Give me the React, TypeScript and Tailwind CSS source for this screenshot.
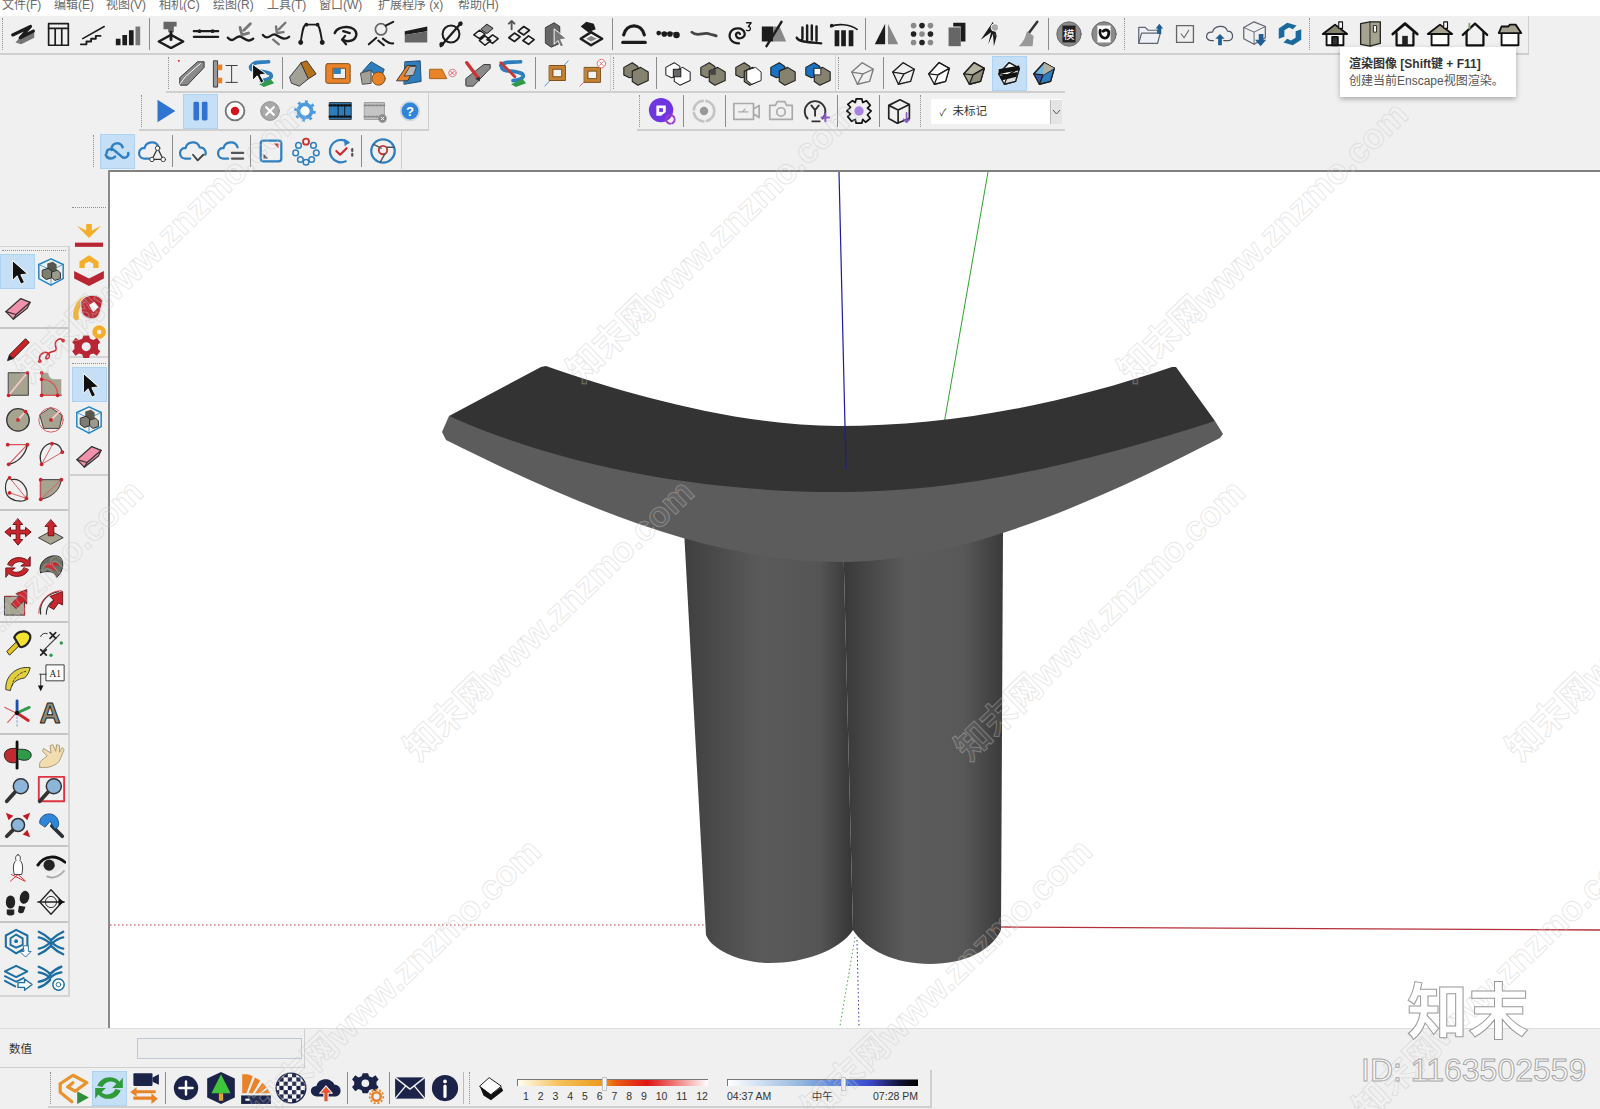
import type { ReactNode } from "react";

const k = "#1c1c1c";
const tan = "#a6a390";
const red = "#c9252d";
const blue = "#2e7dbd";
const navy = "#1b2348";
const org = "#e8832a";

const S = ({ children, size = 30 }: { children: ReactNode; size?: number }) => (
  <svg width={size} height={size} viewBox="0 0 32 32" fill="none" strokeLinecap="round" strokeLinejoin="round">
    {children}
  </svg>
);

const B = ({ on, children }: { on?: boolean; children: ReactNode }) => (
  <div className={`flex h-[35px] w-[35px] shrink-0 items-center justify-center ${on ? "bg-[#c4dff6] outline outline-[#aed3f2] -outline-offset-1" : ""}`}>
    {children}
  </div>
);

const Sep = ({ w = "w-[7px]" }: { w?: string }) => (
  <div className={`flex h-[32px] shrink-0 justify-center ${w}`}>
    <div className="w-[1px] bg-[#8c8c8c]" />
  </div>
);

const Grip = ({ w = "w-[8px]" }: { w?: string }) => (
  <div className={`h-[32px] shrink-0 pl-[2px] ${w}`}>
    <div className="h-full w-[1px] border-l border-dotted border-[#8f8f8f]" />
  </div>
);

const HGrip = () => <div className="mx-[2px] mb-[3px] h-[1px] border-t border-dotted border-[#8f8f8f]" />;
const HSep = ({ h }: { h: string }) => (
  <div className={`col-span-2 flex items-center ${h}`}>
    <div className="h-[2px] w-full bg-[#c6c6c6]" />
  </div>
);

/* ---------- drawn icons ---------- */
const Cube = ({ f = tan, s = k, t = "#c9c7b6", d = "#7f7d6c" }: { f?: string; s?: string; t?: string; d?: string }) => (
  <g stroke={s} strokeWidth="1.4">
    <path d="M16 5 27 11 23 25 11 28 5 17Z" fill={f} />
    <path d="M16 5 5 17 15 18 27 11Z" fill={t} />
    <path d="M15 18 11 28 23 25 27 11Z" fill={d} />
  </g>
);
const WireCube = () => (
  <g stroke={k} strokeWidth="1.4">
    <path d="M15 5 27 12 23 25 10 28 4 15Z" />
    <path d="M4 15 16 17 27 12M16 17 10 28" />
  </g>
);
const Stack = ({ a = "#85826f", b = "#85826f" }: { a?: string; b?: string }) => (
  <g stroke="#222" strokeWidth="1.2">
    <path d="M3 10 12 5 18 9 18 19 9 21 3 18Z" fill={a} />
    <path d="M12 14 21 10 29 15 29 24 18 29 12 25Z" fill={b} />
  </g>
);
const House = ({ roof = tan, door, chim }: { roof?: string; door?: boolean; chim?: boolean }) => (
  <g stroke="#111" strokeWidth="2">
    <path d="M7 15V28H25V15" fill="#fff" />
    <path d="M3 16 16 6 29 16Z" fill={roof} />
    {door && <rect x="13" y="19" width="6" height="9" fill="#333" />}
    {chim && <rect x="20" y="3" width="4" height="7" fill="#fff" strokeWidth="1.2" />}
  </g>
);
const Arrow = () => <path d="M25 3 14 7 17 10 9 18 14 23 22 15 25 18Z" fill={red} stroke="#7d1015" />;
const Lens = ({ x = 19, y = 12, r = 8 }: { x?: number; y?: number; r?: number }) => (
  <g>
    <path d={`M${x - r * 0.7} ${y + r * 0.7} 4 28`} stroke="#333" strokeWidth="4" />
    <circle cx={x} cy={y} r={r} fill="#8db4d9" stroke="#333" strokeWidth="1.6" />
  </g>
);
const Pointer = () => <path d="M10 4V25L15 20 19 29 23 27 19 19 26 18Z" fill="#111" stroke="#fff" strokeWidth="1" />;
const Eraser = () => (
  <g stroke="#333" strokeWidth="1.3">
    <path d="M3 21 19 7 29 11 26 17 11 29Z" fill="#f191ab" />
    <path d="M3 21 14 24 29 11" />
    <path d="M14 24 11 29" />
  </g>
);
const BoxGroup = () => (
  <g>
    <path d="M16 2 29 8V23L16 30 3 23V8Z" stroke="#1f86c6" strokeWidth="1.6" />
    <path d="M3 8 16 14 29 8M16 14V30" stroke="#1f86c6" strokeWidth=".8" />
    <path d="M12 7 18 5 22 8 22 14 16 16 12 13Z" fill="#57574f" />
    <path d="M7 14 13 12 17 15 17 22 11 24 7 21Z" fill="#7d7d72" stroke="#222" />
    <path d="M17 16 23 14 26 17 26 23 20 25 17 22Z" fill="#9a9a8e" stroke="#222" />
  </g>
);
const RedDots = ({ d }: { d: [number, number][] }) => (
  <>
    {d.map(([x, y], i) => (
      <circle key={i} cx={x} cy={y} r="2" fill={red} />
    ))}
  </>
);
const CloudPath = "M9 23H6C-1 22 1 13 8 14 10 6 22 6 24 13 31 13 31 23 25 23H20";

export default function App() {
  return (
    <div className="relative h-[1109px] w-[1600px] overflow-hidden bg-[#f0f0f0] font-['Liberation_Sans','Noto_Sans_CJK_SC',sans-serif] text-[#333]">
      {/* top area */}
      <header className="h-[170px]">
        <div className="flex h-[16px] items-start overflow-hidden bg-white text-[12px] leading-[12px] text-[#6a6a6a]">
          <div className="-mt-[1px] flex pl-[2px]">
            <span className="w-[52px]">文件(F)</span>
            <span className="w-[52px]">编辑(E)</span>
            <span className="w-[53px]">视图(V)</span>
            <span className="w-[54px]">相机(C)</span>
            <span className="w-[54px]">绘图(R)</span>
            <span className="w-[52px]">工具(T)</span>
            <span className="w-[59px]">窗口(W)</span>
            <span className="w-[80px]">扩展程序 (x)</span>
            <span>帮助(H)</span>
          </div>
        </div>

        {/* row 1 */}
        <div className="flex h-[39px] w-[1529px] items-center border-b-2 border-r border-[#cfcfcf] pb-[1px]">
          <Grip w="w-[5.5px]" />
          <B><S><path d="M14 27 28 20V11L14 18 8 25Z" fill="#777" /><path d="M5 17 24 8 13 20 27 13" stroke={k} strokeWidth="3.4" /></S></B>
          <B><S><rect x="6" y="5" width="21" height="23" stroke={k} strokeWidth="1.8" /><path d="M6 10H27M13 10V28M20 10V28" stroke={k} strokeWidth="1.8" /></S></B>
          <B><S><path d="M3 27H9V24H14V21H19V18H24" stroke={k} strokeWidth="2" /><path d="M5 21 28 8" stroke={k} strokeWidth="1.6" /></S></B>
          <B><S><path d="M3 21H8V28H3ZM10 17H15V28H10ZM17 12H22V28H17Z" fill={k} /><path d="M24 8H29V28H24Z" fill="#777" /></S></B>
          <Sep w="w-[8px]" />
          <B><S><path d="M3 24 16 17 29 24 16 31Z" stroke={k} strokeWidth="2.6" /><path d="M8 3H22V8H19V14H13V11H8Z" fill="#666" /><path d="M16 14V22" stroke={k} strokeWidth="3" /></S></B>
          <B><S><path d="M3 13H29M3 19H29" stroke={k} strokeWidth="2.4" /><circle cx="9" cy="13" r="2" fill={k} /><circle cx="23" cy="13" r="2" fill={k} /></S></B>
          <B><S><path d="M2 20C8 27 11 16 16 19S25 25 29 21" stroke={k} strokeWidth="2.6" /><path d="M26 5 19 12M15 9 17 17 24 15" stroke="#777" strokeWidth="3" /></S></B>
          <B><S><path d="M2 17C8 24 11 14 16 17S25 23 30 19" stroke={k} strokeWidth="2.4" /><path d="M26 4 19 11M16 8 17 15 24 14M13 22 19 27" stroke="#777" strokeWidth="2.6" /></S></B>
          <B><S><path d="M5 25C7 11 8 6 11 6H22C25 6 26 13 28 25" stroke={k} strokeWidth="2" /><circle cx="5" cy="25" r="2.6" fill={k} /><circle cx="28" cy="25" r="2.6" fill={k} /><circle cx="11" cy="6" r="2" fill={k} /><circle cx="23" cy="6" r="2" fill={k} /></S></B>
          <B><S><path d="M4 15C7 6 28 6 27 17 26 24 17 25 12 22" stroke={k} strokeWidth="2.6" /><path d="M13 13 20 15M15 18 12 22 16 27" stroke={k} strokeWidth="2.4" /></S></B>
          <B><S><circle cx="16" cy="11" r="6" stroke="#666" strokeWidth="1.8" /><path d="M21 7 29 3M3 27 11 20M18 21C22 24 25 27 29 26M13 23 19 28" stroke={k} strokeWidth="2.2" /></S></B>
          <B><S><path d="M4 13 28 8V13L4 17Z" fill={k} /><path d="M4 17 28 13V25H4Z" fill="#666" /></S></B>
          <B><S><circle cx="16" cy="16" r="9" stroke={k} strokeWidth="2.2" /><path d="M5 29 27 4" stroke={k} strokeWidth="2.4" /><circle cx="6" cy="27" r="2.4" fill={k} /><circle cx="26" cy="5" r="2.4" fill={k} /></S></B>
          <B><S><path d="M3 17 9 12 15 16 9 21ZM11 11 17 6 23 10 17 15ZM17 22 23 17 29 21 23 26ZM9 23 15 18 21 23 15 28Z" stroke={k} strokeWidth="1.6" /><path d="M11 11 17 6 23 10 17 15Z" fill="#888" /></S></B>
          <B><S><path d="M3 20 9 15 15 19 9 24ZM13 13 19 8 25 12 19 17ZM18 23 24 18 30 22 24 27Z" stroke={k} strokeWidth="1.8" /><path d="M6 2V11M3 5 6 2 9 5" stroke="#555" strokeWidth="2" /></S></B>
          <B><S><path d="M5 9 14 4 20 8V26L11 30 5 26Z" fill="#666" stroke="#333" /><path d="M14 11V27L18 23 21 30 24 28 21 22 27 21Z" fill="#777" stroke="#fff" /></S></B>
          <B><S><path d="M5 8 11 3 19 5 21 11 13 14Z" fill={k} /><path d="M5 21 16 14 28 21 16 28Z" stroke={k} strokeWidth="2.6" /><path d="M11 21 16 18 22 21 16 24Z" fill="#888" /></S></B>
          <Sep w="w-[8px]" />
          <B><S><path d="M5 17C8 4 24 4 27 17" stroke={k} strokeWidth="3.4" /><path d="M4 25H28" stroke={k} strokeWidth="3.4" /></S></B>
          <B><S><circle cx="5" cy="15" r="2.5" fill={k} /><circle cx="11" cy="16" r="3" fill={k} /><circle cx="17" cy="16" r="3" fill={k} /><circle cx="24" cy="17" r="3.5" fill={k} /><path d="M5 15H24" stroke={k} /></S></B>
          <B><S><path d="M3 14C9 20 16 13 22 16 25 17 27 17 29 18" stroke="#444" strokeWidth="3" /></S></B>
          <B><S><path d="M16 26C8 26 4 20 7 14 10 9 20 8 22 15 23 20 15 23 13 18 12 15 16 13 17 16" stroke={k} strokeWidth="2.4" /><path d="M24 4H29L26 8C30 9 28 14 24 12" stroke={k} strokeWidth="1.4" /></S></B>
          <B><S><path d="M3 8H15V24H3Z" fill={k} /><path d="M15 8H22L29 24H15Z" fill="#888" /><path d="M8 29 24 3" stroke={k} strokeWidth="2.6" /></S></B>
          <B><S><path d="M3 20C5 25 20 25 29 26M9 9V21M14 7V22M19 7V22M24 8V23" stroke={k} strokeWidth="2.6" /></S></B>
          <B><S><path d="M2 8C8 5 22 5 30 11" stroke={k} strokeWidth="1.8" /><circle cx="3" cy="7" r="2" fill={k} /><path d="M6 12H11V29H6ZM13 12H18V29H13ZM21 12H26V29H21Z" fill={k} /></S></B>
          <Sep w="w-[8px]" />
          <B><S><path d="M14 5V27H3Z" fill={k} /><path d="M17 5V27H28Z" fill="#888" /></S></B>
          <B><S>{[7, 16, 25].map((x) => [7, 16, 25].map((y) => <circle key={`${x}${y}`} cx={x} cy={y} r="3" fill={(x + y) % 2 ? "#222" : "#8a8a8a"} />))}</S></B>
          <B><S><path d="M12 4H25V24H20V8H12Z" fill={k} /><path d="M7 9H20V29H7Z" fill="#666" /></S></B>
          <B><S><path d="M17 3 21 18 17 16 12 27 15 14 4 22Z" fill={k} /><path d="M17 16 18 29 21 18Z" fill={k} /><circle cx="19" cy="9" r="4" fill="#aaa" stroke="#fff" /></S></B>
          <B><S><path d="M27 3 18 15" stroke="#333" strokeWidth="2.6" /><path d="M16 13 23 18 22 29H7C12 25 14 20 16 13Z" fill="#999" /></S></B>
          <Sep />
          <B><S><circle cx="16" cy="16" r="13" fill="#8a8a8a" stroke="#666" /><rect x="9" y="7" width="14" height="18" fill="#222" /><text x="16" y="21" fontSize="12" fill="#fff" textAnchor="middle">模</text></S></B>
          <B><S><circle cx="16" cy="16" r="13" fill="#8a8a8a" stroke="#666" /><rect x="9" y="7" width="14" height="18" fill="#fff" /><path d="M12 12C10 20 20 24 21 16 22 11 17 11 15 13" stroke="#111" strokeWidth="3" /></S></B>
          <Grip w="w-[10.5px]" />
          <B><S><path d="M4 26V9H11L14 12H24V26Z" fill="#eef0f7" stroke="#5f6472" strokeWidth="1.3" /><path d="M4 26 7 15H27L24 26Z" fill="#eef0f7" stroke="#5f6472" strokeWidth="1.3" /><path d="M26 5 30 10H28V16H24V10H22Z" fill="#1f5f94" /></S></B>
          <B><S><rect x="7" y="7" width="18" height="18" stroke="#666" strokeWidth="1.4" /><path d="M12 16 15 20 20 12" stroke="#666" strokeWidth="1.2" /></S></B>
          <B><S><path d={CloudPath} stroke="#4e5463" strokeWidth="1.3" /><path d="M16 16 21 21H18V28H14V21H11Z" fill="#1f5f94" /></S></B>
          <B><S><path d="M15 3 27 8V20L15 27 4 21V9Z" stroke="#5f6472" strokeWidth="1.3" /><path d="M4 9 15 14 27 8M15 14V27" stroke="#5f6472" /><path d="M20 16H25V22H28L22 29 16 22H20Z" fill="#1f5f94" /></S></B>
          <B><S><path d="M13 4 23 7 19 11 15 9 10 12V19L4 21V10ZM19 28 9 25 13 21 17 23 22 20V13L28 11V22Z" fill="#1c6a9c" /></S></B>
          <Grip w="w-[10.5px]" />
          <B><S><House door chim roof="#86836f" /></S></B>
          <B><S><path d="M6 5 16 3H27V26L16 29 6 27Z" fill={tan} stroke="#222" strokeWidth="1.4" /><path d="M16 3V29" stroke="#222" /><rect x="20" y="7" width="3" height="7" fill="#fff" stroke="#222" /></S></B>
          <B><S><path d="M3 16 16 5 29 16" stroke="#111" strokeWidth="3" /><path d="M7 15V28H25V15" stroke="#111" strokeWidth="2.4" /><rect x="13" y="18" width="6" height="10" fill="#222" /></S></B>
          <B><S><House chim /></S></B>
          <B><S><path d="M3 17 16 5 29 17" stroke="#111" strokeWidth="2.4" /><path d="M7 14V28H25V14" stroke="#111" strokeWidth="2.4" /><path d="M10 5V10" stroke="#8a6" strokeWidth="2" /></S></B>
          <B><S><path d="M7 15H25V28H7Z" fill="#fff" stroke="#111" strokeWidth="2" /><path d="M4 15 7 8H14L16 6H22L28 15Z" fill={tan} stroke="#111" strokeWidth="2" /></S></B>
        </div>

        {/* row 2 */}
        <div className="ml-[166px] flex h-[38px] w-[899px] items-center border-b-2 border-[#cfcfcf]">
          <Grip w="w-[7.5px]" />
          <B><S><path d="M4 28V21L23 4H30V10L12 29H5Z" fill="#8a8a8a" stroke="#333" /><path d="M4 28 10 20 26 6" stroke="#fff" /><circle cx="3" cy="3" r="1" fill="#d00" /></S></B>
          <B><S><rect x="3" y="3" width="4" height="28" fill="#999" stroke="#333" /><rect x="7" y="7" width="5" height="6" fill={org} /><rect x="7" y="21" width="5" height="6" fill={org} /><path d="M16 8H28M22 8V26M16 26H28" stroke="#333" /></S></B>
          <B><S><path d="M6 8C9 3 16 5 24 4M5 9C4 16 18 12 26 17 30 22 20 24 16 24" stroke={blue} strokeWidth="4" /><path d="M14 28 26 22 30 27 19 31Z" fill="#2f9a4a" /><path d="M7 7V24L12 19 16 27 19 25 15 18 21 17Z" fill="#111" stroke="#fff" /></S></B>
          <Sep />
          <B><S><path d="M2 20 14 5 22 22 12 30 4 27Z" fill="#a3a097" stroke="#333" /><path d="M14 5 20 3 30 17 22 22Z" fill="#b5711c" stroke="#333" /></S></B>
          <B><S><rect x="3" y="6" width="26" height="21" rx="2" fill={org} stroke="#7a4a12" /><rect x="11" y="11" width="13" height="11" fill="#eee" stroke="#7a4a12" /><rect x="11" y="11" width="8" height="6" fill={blue} /></S></B>
          <B><S><path d="M5 14 14 4 28 12 24 23 14 14Z" fill={blue} stroke="#23517a" /><path d="M3 16 14 13 14 27 5 28Z" fill="#a3a097" stroke="#444" /><ellipse cx="22" cy="22" rx="7" ry="7" fill={org} stroke="#7a4a12" /></S></B>
          <B><S><path d="M13 4 29 3 30 25 12 28Z" fill={blue} stroke="#1f4a70" /><path d="M4 24 15 8H24L16 24Z" fill={org} stroke="#333" /><path d="M12 19 18 9H25L22 18Z" fill="#b9b9b9" stroke="#444" /></S></B>
          <B><S><path d="M2 12H15L20 22H2Z" fill={org} stroke="#a55e12" /><circle cx="26" cy="16" r="4" stroke="#d78" /><path d="M24 14 28 18M28 14 24 18" stroke="#d55" /></S></B>
          <B><S><path d="M3 29V22L22 7H29V11L11 30H4Z" fill="#8a8a8a" stroke="#333" /><path d="M4 5 16 21" stroke="#c33" strokeWidth="3.6" /><path d="M13 22 18 20 18 25Z" fill="#333" /></S></B>
          <B><S><path d="M3 8C7 3 14 5 24 4M4 9C3 16 18 12 26 17 30 22 20 24 16 24" stroke={blue} strokeWidth="4" /><path d="M14 28 26 22 30 27 19 31Z" fill="#2f9a4a" /><path d="M3 5 18 20" stroke="#c33" strokeWidth="3" /></S></B>
          <Sep w="w-[9px]" />
          <B><S><path d="M28 3 3 30" stroke="#4f8fd4" /><rect x="8" y="8" width="17" height="16" fill="#c58234" stroke="#7a4a12" /><rect x="12" y="12" width="9" height="8" fill="#f3f3f3" stroke="#7a4a12" /></S></B>
          <B><S><path d="M26 8 3 30" stroke="#e46a6a" /><rect x="8" y="10" width="17" height="16" fill="#c58234" stroke="#7a4a12" /><rect x="12" y="14" width="9" height="8" fill="#f3f3f3" stroke="#7a4a12" /><circle cx="26" cy="6" r="4.5" fill="#fff" stroke="#e46a6a" /><path d="M24 4 28 8M28 4 24 8" stroke="#e46a6a" /></S></B>
          <div className="h-[36px] w-[1px] shrink-0 bg-[#d4d4d4]" />
          <Grip w="w-[7.5px]" />
          <B><S><Stack /></S></B>
          <Sep />
          <B><S><g strokeWidth="1.1" stroke="#222"><path d="M3 10 12 5 18 9 18 19 9 21 3 18Z" fill="#fff" /><path d="M12 14 21 10 29 15 29 24 18 29 12 25Z" fill="#fff" /><rect x="11" y="12" width="8" height="8" fill="#666" /></g></S></B>
          <B><S><Stack /><rect x="13" y="12" width="6" height="6" fill="#444" /></S></B>
          <B><S><Stack /><path d="M15 13 24 10 30 15 30 24 20 28 15 24Z" fill="#fff" stroke="#222" /></S></B>
          <B><S><Stack a="#1a72c4" /></S></B>
          <B><S><Stack a="#1a72c4" /><rect x="12" y="11" width="7" height="7" fill="#fff" stroke="#222" /></S></B>
          <div className="h-[36px] w-[1px] shrink-0 bg-[#d4d4d4]" />
          <Grip w="w-[9.5px]" />
          <B><S><g opacity=".55"><WireCube /></g></S></B>
          <Sep w="w-[6px]" />
          <B><S><WireCube /></S></B>
          <B><S><Cube f="#fff" t="#fff" d="#fff" /></S></B>
          <B><S><Cube f="#a8a58f" t="#b5b39f" d="#8f8d7a" /></S></B>
          <B on><S><Cube f="#fff" t="#fff" d="#ddd" /><path d="M5 12 27 8 27 13 5 17ZM6 19 25 15 24 20 8 24Z" fill="#111" /></S></B>
          <B><S><Cube f="#35a" t="#6fb5dd" d="#2b7fc0" /><path d="M27 11 15 18 16 5Z" fill="#b5b39f" /></S></B>
        </div>

        {/* row 3 */}
        <div className="flex h-[38px]">
          <div className="ml-[139px] flex h-[38px] w-[290px] items-center border-b-2 border-r border-[#cfcfcf]">
            <Grip w="w-[8.5px]" />
            <B><S><path d="M8 4 27 16 8 28Z" fill="#2f74d0" /></S></B>
            <B on><S><rect x="9" y="6" width="6" height="20" rx="1.5" fill="#2f74d0" /><rect x="18" y="6" width="6" height="20" rx="1.5" fill="#2f74d0" /></S></B>
            <B><S><circle cx="16" cy="16" r="10" fill="#fff" stroke="#777" strokeWidth="2" /><circle cx="16" cy="16" r="4.5" fill="#d3151b" /></S></B>
            <B><S><circle cx="16" cy="16" r="10" fill="#a8a8a8" stroke="#8d8d8d" /><path d="M12 12 20 20M20 12 12 20" stroke="#fff" strokeWidth="2.4" /></S></B>
            <B><S><circle cx="16" cy="16" r="7" fill="#fff" stroke="#4b9be0" strokeWidth="4" /><circle cx="16" cy="16" r="10" stroke="#4b9be0" strokeWidth="3" strokeDasharray="3 4.8" strokeLinecap="butt" /></S></B>
            <B><S><rect x="5" y="7" width="23" height="18" fill="#2c7db9" stroke="#333" /><path d="M5 10H28M5 22H28" stroke="#111" strokeWidth="2.4" strokeDasharray="2 2" /><path d="M14 10V22M21 10V22" stroke="#111" /></S></B>
            <B><S><rect x="5" y="7" width="21" height="18" fill="#c4c4c4" stroke="#999" /><path d="M5 10H26M5 22H26" stroke="#888" strokeWidth="2" strokeDasharray="2 2" /><circle cx="24" cy="24" r="4.5" fill="#888" /><path d="M22.5 22.5 25.5 25.5M25.5 22.5 22.5 25.5" stroke="#fff" /></S></B>
            <B><S><circle cx="16" cy="16" r="10" fill="#2f85d8" stroke="#cfd8e0" strokeWidth="2" /><text x="16" y="21" fontSize="14" fontWeight="700" fill="#fff" textAnchor="middle">?</text></S></B>
          </div>
          <div className="ml-[208px] flex h-[38px] w-[428px] items-center border-b-2 border-[#cfcfcf]">
            <Grip w="w-[7.5px]" />
            <B><S><circle cx="15" cy="15" r="13" fill="#6f36e0" /><path d="M10 10H20V17L15 21H10Z" fill="#fff" /><rect x="13" y="13" width="4" height="4" fill="#6f36e0" /><circle cx="25" cy="25" r="4.5" stroke="#a03ad0" strokeWidth="2" strokeDasharray="5 2" /></S></B>
            <Sep />
            <B><S><circle cx="16" cy="16" r="4.5" fill="#999" /><circle cx="16" cy="16" r="11" stroke="#c4c4c4" strokeWidth="3" strokeDasharray="14 4" /></S></B>
            <Sep />
            <B><S><path d="M3 8H24V25H3ZM24 14 30 10V23L24 19" stroke="#aaa" strokeWidth="1.8" /><path d="M8 17H18M15 14 12 17" stroke="#aaa" strokeWidth="1.4" /></S></B>
            <B><S><path d="M4 10H10L12 6H20L22 10H28V25H4Z" stroke="#aaa" strokeWidth="1.8" /><circle cx="16" cy="17" r="4.5" stroke="#aaa" strokeWidth="1.8" /></S></B>
            <B><S><path d="M7 24A11 11 0 1 1 23 24" stroke="#333" strokeWidth="2" /><path d="M11 10 15 15 19 10M15 15V21" stroke="#333" strokeWidth="2" /><path d="M12 27H20" stroke="#333" strokeWidth="2" /><path d="M26 19V27M22 23H30" stroke="#8a5cc9" strokeWidth="2.2" /></S></B>
            <Sep w="w-[8px]" />
            <B><S><path d="M13 3H19L20 7 24 5 28 10 25 13 29 16 25 20 28 24 23 28 20 25 19 29H13L12 25 8 27 4 22 7 19 3 16 7 12 4 9 9 5 12 7Z" stroke="#111" strokeWidth="1.8" /><circle cx="16" cy="16" r="5" fill="#a983e0" /></S></B>
            <Sep w="w-[6px]" />
            <B><S><path d="M4 10 16 4 26 9V24L13 29 4 24ZM4 10 14 15V29M14 15 26 9" stroke="#222" strokeWidth="1.8" /><path d="M23 18V28M20 25 23 28 26 25" stroke="#8a5cc9" strokeWidth="1.8" /></S></B>
            <Grip w="w-[13px]" />
            <div className="mt-[1px] flex h-[25px] w-[131px] items-center bg-white pl-[9px] pt-[1px] text-[11.5px]">
              <span className="w-[13px] text-[10px]">✓</span>
              <span className="flex-1">未标记</span>
              <div className="flex h-full w-[12px] items-center justify-center border-l border-[#bbb] bg-[#e4e4e4]">
                <svg width="9" height="6" viewBox="0 0 9 6"><path d="M1 1 4.5 5 8 1" fill="none" stroke="#555" /></svg>
              </div>
            </div>
          </div>
        </div>

        {/* row 4 */}
        <div className="ml-[91px] flex h-[38px] w-[311px] items-center border-r border-[#cfcfcf] pt-[2px]">
          <Grip w="w-[8.5px]" />
          <B on><S><path d="M5 18C5 13 11 13 14 16L21 22C24 25 29 22 28 18M10 15C10 6 20 6 22 12M4 20C6 26 12 24 14 22" stroke="#2f7fc1" strokeWidth="2.6" /></S></B>
          <B><S><path d="M13 24H7C0 23 1 12 8 13 10 5 21 5 23 12" stroke="#2f7fc1" strokeWidth="2.4" /><path d="M22 13 16 25H28Z" stroke="#333" strokeWidth="1.4" /><circle cx="22" cy="13" r="2.4" fill="#fff" stroke="#333" /><circle cx="16" cy="25" r="2.4" fill="#fff" stroke="#333" /><circle cx="28" cy="25" r="2.4" fill="#fff" stroke="#333" /></S></B>
          <Sep w="w-[6px]" />
          <B><S><path d="M13 24H7C0 23 1 12 8 13 10 5 21 5 23 12 30 12 30 19 29 20" stroke="#2f7fc1" strokeWidth="2.4" /><path d="M16 20 21 26 27 20" stroke="#444" strokeWidth="2" /></S></B>
          <div className="w-[2.5px] shrink-0" />
          <B><S><path d="M13 24H7C0 23 1 12 8 13 10 5 21 5 23 12" stroke="#2f7fc1" strokeWidth="2.4" /><path d="M17 18H29M17 24H29" stroke="#555" strokeWidth="2.4" /></S></B>
          <Sep w="w-[5px]" />
          <B><S><rect x="5" y="5" width="22" height="22" rx="3" stroke="#2f7fc1" strokeWidth="2.4" /><path d="M19 8H24V13Z" fill="#c9352d" /><path d="M13 24H8V19Z" fill="#555" /></S></B>
          <B><S><circle cx="16" cy="6" r="3.2" stroke="#c9352d" strokeWidth="2" />{[[8, 10], [24, 10], [5, 18], [27, 18], [10, 25], [22, 25], [16, 28]].map(([x, y]) => <circle key={`${x}${y}`} cx={x} cy={y} r="3" stroke="#2f7fc1" strokeWidth="1.6" />)}</S></B>
          <B><S><path d="M24 7A12 12 0 1 0 21 27" stroke="#2f7fc1" strokeWidth="2.4" /><path d="M19 3 25 7 20 11Z" fill="#2f7fc1" /><path d="M11 16 15 20 22 13" stroke="#d3252a" strokeWidth="2.2" /><path d="M28 14V24" stroke="#555" strokeWidth="2.4" strokeDasharray="2 3" /></S></B>
          <Sep w="w-[7.5px]" />
          <B><S><circle cx="16" cy="16" r="12.5" stroke="#2f7fc1" strokeWidth="2.4" /><circle cx="16" cy="15" r="4.5" stroke="#c9352d" strokeWidth="2" /><path d="M6 9 14 13M20 12H28M18 19 13 28" stroke="#555" strokeWidth="1.6" /></S></B>
        </div>
      </header>

      {/* middle */}
      <div className="flex h-[858px]">
        <aside className="flex h-full w-[110px] shrink-0 border-r-2 border-[#8a8a8a]">
          <div className="w-[70px] shrink-0 pt-[76px]">
            <div className="border-b-2 border-r-2 border-t border-[#d4d4d4] pt-[3px]">
              <HGrip />
              <div className="grid grid-cols-[33px_35px]">
                <B on><S><Pointer /></S></B>
                <B><S><BoxGroup /></S></B>
                <B><S><Eraser /></S></B>
                <div />
                <HSep h="h-[7px]" />
                <B><S><path d="M5 28 7 22 24 5 28 9 11 26Z" fill="#c22" stroke="#222" /><path d="M5 28 7 22 11 26Z" fill="#222" /></S></B>
                <B><S><path d="M4 29C2 20 12 17 14 22S8 28 11 24C14 15 24 22 21 13 19 7 26 3 29 7" stroke="#c9252d" strokeWidth="1.6" /><RedDots d={[[4, 29], [29, 7]]} /></S></B>
                <B><S><rect x="6" y="4" width="21" height="24" fill={tan} stroke="#333" /><path d="M6 28 26 4" stroke="#f6c9c9" strokeWidth="2" /><RedDots d={[[6, 28], [26, 4]]} /></S></B>
                <B><S><path d="M6 4V28H27V11H20A7 7 0 0 1 13 4Z" fill={tan} /><path d="M6 4V28H27M6 11C16 11 23 18 23 28" stroke="#d8555a" strokeWidth="1.4" /><RedDots d={[[6, 4], [6, 11], [23, 28], [6, 28]]} /></S></B>
                <B><S><circle cx="16" cy="17" r="12" fill={tan} stroke="#333" strokeWidth="1.4" /><path d="M16 17 24 8" stroke="#f6c9c9" strokeWidth="2" /><RedDots d={[[16, 17], [24, 8]]} /></S></B>
                <B><S><path d="M16 4 28 12 25 26H8L4 12Z" fill={tan} stroke="#333" /><circle cx="16" cy="17" r="13" stroke="#d8555a" /><path d="M16 17 25 8" stroke="#f6c9c9" strokeWidth="2" /><RedDots d={[[16, 17]]} /></S></B>
                <B><S><path d="M5 6H26L6 27" stroke="#d8555a" strokeWidth="1.2" /><path d="M6 27C16 25 24 17 26 6" stroke="#333" strokeWidth="1.4" /><RedDots d={[[5, 6], [26, 6], [6, 27]]} /></S></B>
                <B><S><path d="M6 27 28 14" stroke="#d8555a" /><path d="M6 27 C 1 14 10 3 20 5 25 6 27 10 28 14" stroke="#333" strokeWidth="1.4" /><path d="M6 27 18 5" stroke="#d8555a" /><RedDots d={[[6, 27], [28, 14], [17, 5]]} /></S></B>
                <B><S><path d="M7 4 25 26" stroke="#d8555a" /><path d="M7 4C1 8 1 22 8 26 14 30 24 30 25 26M9 6C20 4 28 16 25 26" stroke="#333" strokeWidth="1.3" /><path d="M7 20 25 26" stroke="#d8555a" /><RedDots d={[[7, 4], [25, 26], [7, 20]]} /></S></B>
                <B><S><path d="M5 6H27C26 16 18 25 5 27Z" fill={tan} stroke="#333" /><path d="M5 6V27L27 6" stroke="#d8555a" /><RedDots d={[[5, 6], [5, 27], [27, 6]]} /></S></B>
                <HSep h="h-[8px]" />
                <B><S><path d="M16 2 21 8H18V14H24V11L30 16 24 21V18H18V24H21L16 30 11 24H14V18H8V21L2 16 8 11V14H14V8H11Z" fill={red} stroke="#6c0f14" /></S></B>
                <B><S><path d="M3 22 16 15 29 22 16 29Z" fill={tan} stroke="#333" /><path d="M16 3 22 10H19V20H13V10H10Z" fill={red} stroke="#6c0f14" /></S></B>
                <B><S><path d="M5 13C8 5 20 4 26 9L29 5V15H19L23 12C19 9 12 10 10 15ZM27 19C24 27 12 28 6 23L3 27V17H13L9 20C13 23 20 22 22 17Z" fill={red} stroke="#6c0f14" /></S></B>
                <B><S><path d="M5 22C1 11 14 1 25 5 31 9 29 22 22 27 20 20 12 20 5 22Z" fill="#6b6b5f" stroke="#222" /><path d="M9 16C15 9 22 10 25 15L18 14 22 21 14 17Z" fill={red} /></S></B>
                <B><S><rect x="2" y="10" width="21" height="20" fill={tan} stroke="#333" /><path d="M2 10H12M23 20V30" stroke={red} /><Arrow /></S></B>
                <B><S><path d="M5 29C3 16 12 7 24 5M11 29C11 21 16 14 24 12" stroke="#333" strokeWidth="1.2" /><path d="M3 28A24 24 0 0 1 27 4" stroke={red} /><path d="M28 5 15 10 19 14 14 21 19 24 24 17 28 19Z" fill={red} stroke="#6c0f14" /></S></B>
                <HSep h="h-[6px]" />
                <B><S><path d="M17 12 4 25 7 29 20 16" fill="#e6c820" stroke="#222" /><path d="M12 10C15 2 26 2 29 8 30 14 23 22 18 20Z" fill="#f4e430" stroke="#222" strokeWidth="2.4" /></S></B>
                <B><S><path d="M7 25 25 7" stroke="#333" strokeWidth="1.2" /><path d="M5 23 11 29M11 23 5 29M15 5 21 11M21 5 15 11" stroke="#222" strokeWidth="1.8" /><circle cx="27" cy="16" r="1.8" fill="#2f9a4a" /><circle cx="16" cy="29" r="1.8" fill="#2f9a4a" /><path d="M5 9A5 5 0 0 1 12 6" stroke="#222" /></S></B>
                <B><S><path d="M3 28C2 14 14 3 29 5 28 10 26 13 23 16 15 17 9 21 8 29Z" fill="#e2cf3d" stroke="#333" /><path d="M10 24C10 17 18 10 24 9" stroke="#333" strokeDasharray="2 2" /></S></B>
                <B><S><rect x="11" y="2" width="19" height="17" fill="#fff" stroke="#333" /><text x="20.5" y="15" fontSize="10" fontFamily="Liberation Serif" fill="#222" textAnchor="middle">A1</text><path d="M4 12H11M5 12V28" stroke="#333" /><path d="M2 24H8L5 30Z" fill="#111" /></S></B>
                <B><S><path d="M14 16 2 10M14 16 5 26" stroke="#d8555a" strokeWidth="1.2" strokeDasharray="2 1" /><path d="M15 16V3" stroke="#1d4fa8" strokeWidth="3" /><path d="M15 16V30" stroke="#7f9fd8" strokeDasharray="2 2" /><path d="M15 16 28 10" stroke="#2f9a4a" strokeWidth="3" /><path d="M15 16 27 24" stroke={red} strokeWidth="3" /><circle cx="15" cy="16" r="2.4" fill="#111" /></S></B>
                <B><S><text x="15" y="27" fontSize="31" fontWeight="700" fill="#8e8c79" stroke="#222" textAnchor="middle" fontFamily="Liberation Sans">A</text></S></B>
                <HSep h="h-[7px]" />
                <B><S><path d="M15 2V30" stroke="#111" strokeWidth="3" /><path d="M14 9C3 8 0 14 2 19S9 25 14 24" fill="#c32a30" stroke="#222" /><path d="M16 10C25 9 31 12 30 17S22 23 16 20" fill="#2f9a4a" stroke="#222" /></S></B>
                <B><S><path d="M4 29C2 22 9 20 12 17L7 12 8 9 16 14 15 6 18 5 21 12 22 5 25 6 25 13 28 8 30 10 26 20C24 27 12 31 4 29Z" fill="#f1ddb0" stroke="#a99a72" /></S></B>
                <B><S><Lens /></S></B>
                <B><S><rect x="3" y="2" width="27" height="26" stroke="#df3340" strokeWidth="2" /><Lens /></S></B>
                <B><S><Lens x={16} y={16} r={7} /><path d="M3 3 11 6 6 11ZM29 3 21 6 26 11ZM29 29 21 26 26 21Z" fill="#c01a22" /></S></B>
                <B><S><path d="M28 28 17 17" stroke="#2b3036" strokeWidth="4" /><path d="M4 14C3 4 17 1 22 8 26 14 24 20 20 20L15 12 10 18Z" fill="#2f86d8" stroke="#1a4f85" /></S></B>
                <HSep h="h-[7px]" />
                <B><S><path d="M16 3C13 3 13 8 14 9 10 12 11 20 12 24H20C21 20 22 12 18 9 19 8 19 3 16 3Z" fill="#fff" stroke="#333" /><path d="M8 31 16 24 24 31M9 24 23 31" stroke="#d23" /></S></B>
                <B><S><path d="M2 14C9 5 22 5 31 13 24 24 10 24 2 14Z" fill="#e8e8e8" /><circle cx="14" cy="14" r="6" fill="#222" /><path d="M2 14C9 3 22 3 31 11" stroke="#111" strokeWidth="3" /><path d="M12 26C18 29 25 26 30 20" stroke="#aaa" strokeWidth="2" strokeDasharray="2 1" /></S></B>
                <B><S><ellipse cx="8" cy="16" rx="5" ry="7" fill="#222" /><path d="M4 24H12V29C10 31 6 31 4 29Z" fill="#222" /><ellipse cx="23" cy="11" rx="5" ry="7" transform="rotate(15 23 11)" fill="#222" /><path d="M17 20 24 21 22 27C20 29 17 28 16 26Z" fill="#222" /></S></B>
                <B><S><path d="M16 3 28 16 16 29 4 16Z" stroke="#222" strokeWidth="1.4" /><path d="M2 16H30" stroke="#222" strokeWidth="1.6" /><path d="M24 12 30 16 24 20Z" fill="#111" /><circle cx="16" cy="16" r="6" stroke="#222" /></S></B>
                <HSep h="h-[6px]" />
                <B><S><path d="M14 2 26 8V20L14 27 3 20V8Z" stroke="#1c6da1" strokeWidth="2.2" /><path d="M14 7 21 11V18L14 21 8 18V11Z" stroke="#1c6da1" strokeWidth="2" /><circle cx="14" cy="14" r="2" fill="#1c6da1" /><path d="M22 19H27V25H30L24 31 18 25H22Z" fill="#fff" stroke="#1c6da1" /></S></B>
                <B><S><path d="M3 4C10 7 13 10 16 13 19 10 22 7 29 4M3 10C9 11 12 14 16 17 20 14 23 11 29 10M3 28C10 25 13 22 16 19 19 22 22 25 29 28M3 22C9 21 12 18 16 15 20 18 23 21 29 22" stroke="#1c6da1" strokeWidth="2.6" /></S></B>
                <B><S><path d="M14 3 26 9 14 15 2 9ZM2 14 14 20 22 16M2 19 13 25" stroke="#1c6da1" strokeWidth="2" /><path d="M16 21H23V17L31 23 23 29V26H16Z" fill="#fff" stroke="#1c6da1" strokeWidth="1.4" /></S></B>
                <B><S><path d="M3 4C10 7 13 9 15 12 18 9 21 6 27 4M3 10C9 11 12 13 15 16 18 13 21 11 27 10M3 26C10 24 12 21 15 18M3 20C9 19 12 17 15 14" stroke="#1c6da1" strokeWidth="2.6" /><circle cx="24" cy="23" r="6" fill="#fff" stroke="#1c6da1" strokeWidth="1.6" strokeDasharray="2.2 1" /><circle cx="24" cy="23" r="2.4" stroke="#1c6da1" /></S></B>
              </div>
            </div>
          </div>
          <div className="w-[38px] pt-[37px]">
            <div className="border-b-2 border-[#d4d4d4]">
              <HGrip />
              <div className="flex h-[145px] flex-col items-center pt-[11px]">
                <div className="flex h-[30px] items-center"><S><path d="M3 4 13 9V2H19V9L29 4 16 17Z" fill="#f4ae2c" /><rect x="1" y="22" width="30" height="4.5" fill="#b92633" /></S></div>
                <div className="flex h-[36px] items-center"><S size={34}><path d="M7 14V8L16 2 25 8V14H20V10L16 8 12 10V14Z" fill="#f4ae2c" /><path d="M2 17 16 24 30 17V24L16 31 2 24Z" fill="#b92633" /></S></div>
                <div className="flex h-[38px] items-center"><S size={34}><path d="M4 26C2 17 8 9 15 8" stroke="#f4ae2c" strokeWidth="5" /><path d="M8 11C13 3 25 3 29 10L26 22C22 30 12 28 9 21Z" fill="#b92633" stroke="#ddd" /><path d="M16 14 21 11 25 16 20 21Z" fill="#fff" /></S></div>
                <div className="flex h-[30px] items-center"><S size={36}><path d="M11 11H16L17 14 20 15 23 13 26 17 24 19V23L26 25 23 29 20 27 17 28 16 31H11L10 28 7 27 4 29 1 25 3 23V19L1 17 4 13 7 15 10 14Z" fill="#b92633" /><circle cx="13.5" cy="21" r="4" fill="#f0f0f0" /><circle cx="25" cy="8" r="5" fill="#f4ae2c" stroke="#f4ae2c" strokeWidth="2" strokeDasharray="2 1" /><circle cx="25" cy="8" r="2" fill="#f0f0f0" /></S></div>
              </div>
            </div>
            <div className="border-b-2 border-[#cfcfcf] pb-[2px] pt-[5px]">
              <HGrip />
              <div className="flex flex-col items-center">
                <B on><S><Pointer /></S></B>
                <B><S><BoxGroup /></S></B>
                <B><S><Eraser /></S></B>
              </div>
            </div>
          </div>
        </aside>

        {/* viewport */}
        <main className="relative flex-1 border-t-2 border-[#808080] bg-white">
          <svg className="absolute inset-0" width="1490" height="856" viewBox="110 172 1490 856">
            <defs>
              <linearGradient id="cylA" x1="0" x2="1" y1="0" y2="0">
                <stop offset="0" stopColor="#3f3f3f" />
                <stop offset=".45" stopColor="#5a5a5a" />
                <stop offset=".8" stopColor="#555555" />
                <stop offset="1" stopColor="#353535" />
              </linearGradient>
              <linearGradient id="cylB" x1="0" x2="1" y1="0" y2="0">
                <stop offset="0" stopColor="#383838" />
                <stop offset=".4" stopColor="#5c5c5c" />
                <stop offset=".75" stopColor="#585858" />
                <stop offset="1" stopColor="#3a3a3a" />
              </linearGradient>
            </defs>
            <path d="M988 172 944 424" stroke="#2aa52a" strokeWidth="1" />
            <path d="M110 925H705" stroke="#b5303a" strokeWidth="1" strokeDasharray="1.5 2.5" />
            <path d="M1001 927 1600 930" stroke="#b5303a" strokeWidth="1.4" />
            <path d="M855 937 840 1026" stroke="#49a349" strokeWidth="1" strokeDasharray="1.5 2.5" />
            <path d="M857 940 859 1026" stroke="#3838a8" strokeWidth="1" strokeDasharray="1.5 2.5" />
            <path d="M684 530 706 935C712 950 740 963 770 963 805 963 840 950 853 930L843 530Z" fill="url(#cylA)" />
            <path d="M843 530 853 930C866 950 895 964 930 964 965 964 992 950 1001 930L1003 530Z" fill="url(#cylB)" />
            <path d="M449 416 442 432 446 440C586 510 716 562 838 562 960 562 1090 505 1220 438L1223 434 1215 421 838 470Z" fill="#5c5c5c" />
            <path d="M449 416 541 367 546 366C625 394 740 426 838 426 950 426 1060 405 1172 367L1176 367 1215 421C1095 460 970 492 838 492 710 492 570 470 449 416Z" fill="#333" />
            <path d="M839 172 846 469" stroke="#1c1c9c" strokeWidth="1.2" />
          </svg>
        </main>
      </div>

      {/* bottom */}
      <footer className="h-[81px] border-t border-[#dcdcdc]">
        <div className="flex h-[39px] w-[305px] items-center border-b border-r border-[#cfcfcf] pl-[9px] text-[11.5px]">
          <span className="w-[128px] pt-[3px]">数值</span>
          <div className="h-[21px] w-[165px] border border-[#bcc8d8] bg-[#eeeeee]" />
        </div>
        <div className="ml-[48px] mt-[2px] flex h-[38px] w-[884px] items-center border-b-2 border-r-2 border-[#cfcfcf]">
          <Grip w="w-[8.5px]" />
          <B><S size={34}><path d="M3 12 15 4 28 11 17 19 10 15 15 11" stroke="#e8932c" strokeWidth="3" /><path d="M3 12V20L14 29" stroke="#e8932c" strokeWidth="3" /><path d="M19 19 30 25 19 31Z" fill="#2f8f3a" /></S></B>
          <B on><S size={34}><path d="M5 14C8 5 20 3 26 10L29 6V16H19L23 12C19 8 12 10 10 15ZM27 18C24 27 12 29 6 22L3 26V16H13L9 20C13 24 20 22 22 17Z" fill="#2f9a3a" /></S></B>
          <B><S size={34}><rect x="6" y="2" width="18" height="12" rx="1" fill={navy} /><path d="M24 6 30 3V13L24 10Z" fill={navy} /><path d="M3 20 9 15V18H27V21H9V24ZM29 26 23 21V24H6V27H23V31Z" fill={org} /></S></B>
          <Sep />
          <B><S><circle cx="16" cy="16" r="13" fill={navy} /><path d="M16 9V23M9 16H23" stroke="#fff" strokeWidth="2.6" /></S></B>
          <B><S size={34}><path d="M16 1 29 7V25L16 31 3 25V7Z" fill={navy} /><path d="M16 3 25 21H7Z" fill="#40c43c" /><rect x="14" y="21" width="4" height="7" fill="#e3a32c" /></S></B>
          <B><S size={34}><path d="M3 21V3C8 3 10 3 13 5L7 21ZM9 21 15 6 20 9 13 21ZM15 21 22 11 26 15 20 21ZM21 21 27 17 29 21Z" fill={org} /><rect x="2" y="23" width="28" height="8" fill={navy} /><rect x="6" y="26" width="4" height="2" fill="#fff" /></S></B>
          <B><S size={34}><defs><clipPath id="ball"><circle cx="16" cy="16" r="14" /></clipPath></defs><circle cx="16" cy="16" r="14" fill="#fff" stroke={navy} strokeWidth="1.2" /><g clipPath="url(#ball)" fill={navy}>{[1, 9, 17, 25].map((x) => [2, 10, 18, 26].map((y) => <rect key={`a${x}${y}`} x={x} y={y} width="4" height="4" />))}{[5, 13, 21, 29].map((x) => [6, 14, 22].map((y) => <rect key={`b${x}${y}`} x={x} y={y} width="4" height="4" />))}</g></S></B>
          <B><S size={34}><path d="M7 24C0 23 0 14 7 14 9 6 21 6 24 13 31 13 32 23 25 24Z" fill={navy} /><path d="M16 14 22 21H18V29H14V21H10Z" fill="#e8532c" stroke="#f0f0f0" /></S></B>
          <Sep />
          <B><S size={34}><path d="M11 2H16L17 5 20 6 23 4 26 8 24 10V13L26 15 23 19 20 17 17 18 16 21H11L10 18 7 17 4 19 1 15 3 13V10L1 8 4 4 7 6 10 5Z" fill={navy} /><circle cx="13.5" cy="11.5" r="3.6" fill="#f0f0f0" /><circle cx="24" cy="24" r="4" stroke={org} strokeWidth="2.4" /><circle cx="24" cy="24" r="6.4" stroke={org} strokeWidth="1.6" strokeDasharray="2 1.6" strokeLinecap="butt" /></S></B>
          <Sep />
          <B><S size={34}><rect x="2" y="6" width="28" height="20" fill={navy} /><path d="M2 6 16 17 30 6M2 26 12 14M30 26 20 14" stroke="#f0f0f0" strokeWidth="1.4" /></S></B>
          <B><S><circle cx="16" cy="16" r="14" fill={navy} /><circle cx="16" cy="9" r="2" fill="#fff" /><path d="M16 14V25" stroke="#fff" strokeWidth="3.4" /></S></B>
          <div className="flex h-[32px] w-[4px] shrink-0"><div className="w-[1px] bg-[#bbb]" /></div>
          <Grip w="w-[6.5px]" />
          <div className="flex w-[36px] shrink-0 justify-center">
            <S><path d="M4 14 14 5 27 14 16 23Z" fill="#fff" stroke="#111" /><path d="M4 14 16 23 27 15 29 19 16 29 8 24Z" fill="#111" /></S>
          </div>
          <div className="ml-[8px] w-[191px] shrink-0 pt-[6px] text-[10.5px] leading-[14px]">
            <div className="relative h-[7px] border-l border-t border-[#777] bg-[linear-gradient(to_right,#fffef4,#f4c05a_22%,#eb9a1c_45%,#ea5a10_52%,#df1414_68%,#f28a8a_85%,#ffffff)]">
              <div className="absolute -top-[3px] left-[84px] h-[14px] w-[5px] border border-[#c4c4c4] bg-[#f4f4f4]" />
            </div>
            <div className="mt-[3px] flex justify-between pl-[6px]">
              {["1", "2", "3", "4", "5", "6", "7", "8", "9", "10", "11", "12"].map((h) => <span key={h}>{h}</span>)}
            </div>
          </div>
          <div className="ml-[19px] w-[191px] shrink-0 pt-[6px] text-[10.5px] leading-[14px]">
            <div className="relative h-[7px] border-l border-t border-[#777] bg-[linear-gradient(to_right,#ffffff,#8fb4de_40%,#4468d6_65%,#3b46c8_75%,#14143a_90%,#000000)]">
              <div className="absolute -top-[3px] left-[113px] h-[14px] w-[5px] border border-[#c4c4c4] bg-[#f4f4f4]" />
            </div>
            <div className="mt-[3px] flex justify-between">
              <span>04:37 AM</span>
              <span>中午</span>
              <span>07:28 PM</span>
            </div>
          </div>
        </div>
      </footer>

      {/* tooltip */}
      <div className="absolute left-[1340px] top-[47px] h-[50px] w-[176px] bg-white pl-[9px] pt-[9px] text-[12px] leading-[17px] shadow-[0_2px_5px_rgba(0,0,0,0.3)]">
        <div className="font-bold text-[#333]">渲染图像 [Shift键 + F11]</div>
        <div className="text-[#555]">创建当前Enscape视图渲染。</div>
      </div>

      {/* watermarks */}
      <div className="pointer-events-none absolute inset-0 overflow-hidden">
        {[
          "left-[-156px] top-[738px]",
          "left-[395px] top-[738px]",
          "left-[946px] top-[738px]",
          "left-[1497px] top-[738px]",
          "left-[7px] top-[360px]",
          "left-[558px] top-[360px]",
          "left-[1109px] top-[360px]",
          "left-[242px] top-[1097px]",
          "left-[793px] top-[1097px]",
          "left-[1344px] top-[1097px]",
        ].map((pos) => (
          <span
            key={pos}
            className={`absolute ${pos} origin-top-left -rotate-[44deg] whitespace-nowrap text-[35px] font-bold leading-[44px] text-white/5 [-webkit-text-stroke:1px_#c4c4c466]`}
          >
            知末网www.znzmo.com
          </span>
        ))}
        <span className="absolute left-[1407px] top-[973px] text-[61px] font-bold leading-[80px] text-white [-webkit-text-stroke:1px_#9a9a9a]">知末</span>
        <span className="absolute left-[1361px] top-[1051px] text-[32px] leading-[38px] text-white/70 [-webkit-text-stroke:1px_#a8a8a8]">ID: 1163502559</span>
      </div>
    </div>
  );
}
